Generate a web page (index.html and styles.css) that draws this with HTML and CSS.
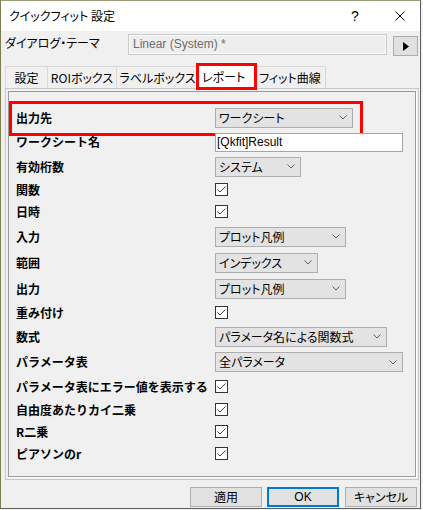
FILE: index.html
```html
<!DOCTYPE html>
<html lang="ja">
<head>
<meta charset="utf-8">
<title>クイックフィット 設定</title>
<link rel="stylesheet" href="styles.css">
</head>
<body>
<div class="window">
  <div class="titlebar">
    <span class="title">クイックフィット 設定</span>
    <span class="tb-btn help">?</span>
    <span class="tb-btn close"><svg width="10" height="10" viewBox="0 0 10 10"><path d="M0.5 0.5 L9.5 9.5 M9.5 0.5 L0.5 9.5" stroke="#000" stroke-width="1" fill="none"/></svg></span>
  </div>
  <div class="client">
    <div class="theme-row">
      <span class="theme-label">ダイアログ・テーマ</span>
      <div class="theme-input">Linear (System) *</div>
      <div class="arrow-btn"><svg width="6" height="9" viewBox="0 0 6 9"><polygon points="0,0 6,4.5 0,9" fill="#000"/></svg></div>
    </div>
    <div class="tabs">
      <div class="tab t1">設定</div>
      <div class="tab t2">ROIボックス</div>
      <div class="tab t3">ラベルボックス</div>
      <div class="tab sel">レポート</div>
      <div class="tab t5">フィット曲線</div>
    </div>
    <div class="panel">
      <div class="group">
        <div class="row h25 highlight">
          <span class="lbl">出力先</span>
          <div class="sel w138"><span>ワークシート</span><svg class="chev" width="8" height="5" viewBox="0 0 8 5"><polyline points="0.5,0.5 4,4 7.5,0.5" fill="none" stroke="#606060"/></svg></div>
        </div>
        <div class="row h24">
          <span class="lbl">ワークシート名</span>
          <div class="txt">[Qkfit]Result</div>
        </div>
        <div class="row h25">
          <span class="lbl">有効桁数</span>
          <div class="sel w86"><span>システム</span><svg class="chev" width="8" height="5" viewBox="0 0 8 5"><polyline points="0.5,0.5 4,4 7.5,0.5" fill="none" stroke="#606060"/></svg></div>
        </div>
        <div class="row h21">
          <span class="lbl">関数</span>
          <svg class="cb" width="13" height="13" viewBox="0 0 13 13"><rect x="0.5" y="0.5" width="12" height="12" fill="#fff" stroke="#333"/><polyline points="2.5,6.5 5,9 10.5,3.5" fill="none" stroke="#444"/></svg>
        </div>
        <div class="row h23">
          <span class="lbl">日時</span>
          <svg class="cb" width="13" height="13" viewBox="0 0 13 13"><rect x="0.5" y="0.5" width="12" height="12" fill="#fff" stroke="#333"/><polyline points="2.5,6.5 5,9 10.5,3.5" fill="none" stroke="#444"/></svg>
        </div>
        <div class="row h27">
          <span class="lbl">入力</span>
          <div class="sel w131"><span>プロット凡例</span><svg class="chev" width="8" height="5" viewBox="0 0 8 5"><polyline points="0.5,0.5 4,4 7.5,0.5" fill="none" stroke="#606060"/></svg></div>
        </div>
        <div class="row h25">
          <span class="lbl">範囲</span>
          <div class="sel w103"><span>インデックス</span><svg class="chev" width="8" height="5" viewBox="0 0 8 5"><polyline points="0.5,0.5 4,4 7.5,0.5" fill="none" stroke="#606060"/></svg></div>
        </div>
        <div class="row h27">
          <span class="lbl">出力</span>
          <div class="sel w131"><span>プロット凡例</span><svg class="chev" width="8" height="5" viewBox="0 0 8 5"><polyline points="0.5,0.5 4,4 7.5,0.5" fill="none" stroke="#606060"/></svg></div>
        </div>
        <div class="row h21">
          <span class="lbl">重み付け</span>
          <svg class="cb" width="13" height="13" viewBox="0 0 13 13"><rect x="0.5" y="0.5" width="12" height="12" fill="#fff" stroke="#333"/><polyline points="2.5,6.5 5,9 10.5,3.5" fill="none" stroke="#444"/></svg>
        </div>
        <div class="row h27">
          <span class="lbl">数式</span>
          <div class="sel w172"><span>パラメータ名による関数式</span><svg class="chev" width="8" height="5" viewBox="0 0 8 5"><polyline points="0.5,0.5 4,4 7.5,0.5" fill="none" stroke="#606060"/></svg></div>
        </div>
        <div class="row h24">
          <span class="lbl">パラメータ表</span>
          <div class="sel w188"><span>全パラメータ</span><svg class="chev" width="8" height="5" viewBox="0 0 8 5"><polyline points="0.5,0.5 4,4 7.5,0.5" fill="none" stroke="#606060"/></svg></div>
        </div>
        <div class="row h25">
          <span class="lbl">パラメータ表にエラー値を表示する</span>
          <svg class="cb" width="13" height="13" viewBox="0 0 13 13"><rect x="0.5" y="0.5" width="12" height="12" fill="#fff" stroke="#333"/><polyline points="2.5,6.5 5,9 10.5,3.5" fill="none" stroke="#444"/></svg>
        </div>
        <div class="row h21">
          <span class="lbl">自由度あたりカイ二乗</span>
          <svg class="cb" width="13" height="13" viewBox="0 0 13 13"><rect x="0.5" y="0.5" width="12" height="12" fill="#fff" stroke="#333"/><polyline points="2.5,6.5 5,9 10.5,3.5" fill="none" stroke="#444"/></svg>
        </div>
        <div class="row h23">
          <span class="lbl">R二乗</span>
          <svg class="cb" width="13" height="13" viewBox="0 0 13 13"><rect x="0.5" y="0.5" width="12" height="12" fill="#fff" stroke="#333"/><polyline points="2.5,6.5 5,9 10.5,3.5" fill="none" stroke="#444"/></svg>
        </div>
        <div class="row h21">
          <span class="lbl">ピアソンのr</span>
          <svg class="cb" width="13" height="13" viewBox="0 0 13 13"><rect x="0.5" y="0.5" width="12" height="12" fill="#fff" stroke="#333"/><polyline points="2.5,6.5 5,9 10.5,3.5" fill="none" stroke="#444"/></svg>
        </div>
      </div>
    </div>
    <div class="btns">
      <div class="btn">適用</div>
      <div class="btn ok">OK</div>
      <div class="btn">キャンセル</div>
    </div>
  </div>
</div>
</body>
</html>
```

FILE: styles.css
```css
* { box-sizing: border-box; }
html, body { margin: 0; padding: 0; }
body {
  background: #f3f3f3;
  font-family: "Noto Sans CJK JP", sans-serif;
  font-size: 12px;
  line-height: 16px;
  color: #000;
}
.window {
  width: 421px;
  height: 509px;
  border: 1px solid #5c5c5c;
  border-left-color: #7d7d4e;
  border-top-color: #9a9a7a;
  background: #f0f0f0;
  display: flex;
  flex-direction: column;
}
.titlebar {
  height: 30px;
  flex: none;
  background: #fff;
  display: flex;
  align-items: center;
}
.title {
  flex: 1;
  padding-left: 8px;
  font-feature-settings: "palt";
}
.tb-btn {
  height: 30px;
  display: flex;
  align-items: center;
  justify-content: center;
}
.help {
  width: 42px;
  font-family: "Liberation Sans", sans-serif;
  font-size: 14px;
}
.close {
  width: 44px;
  padding-left: 4px;
}
.client {
  flex: 1;
  padding: 3px 0 0 4px;
  display: flex;
  flex-direction: column;
}
.theme-row {
  height: 22px;
  display: flex;
  align-items: flex-start;
}
.theme-label {
  width: 123px;
  padding-top: 1px;
  font-feature-settings: "palt";
}
.theme-input {
  width: 259px;
  height: 21px;
  border: 1px solid #cacaca;
  box-shadow: inset 0 0 0 1px #fafafa;
  background: #eeeeee;
  color: #6d6d6d;
  font-family: "Liberation Sans", sans-serif;
  padding-left: 4px;
  line-height: 19px;
}
.arrow-btn {
  margin-left: 6px;
  margin-top: 2px;
  width: 25px;
  height: 20px;
  border: 1px solid #adadad;
  background: #e1e1e1;
  display: flex;
  align-items: center;
  justify-content: center;
}
.tabs {
  margin-top: 8px;
  height: 24px;
  display: flex;
  align-items: flex-end;
}
.tab {
  height: 22px;
  border: 1px solid #d9d9d9;
  border-bottom: none;
  margin-left: -1px;
  display: flex;
  align-items: center;
  justify-content: center;
  background: #f0f0f0;
  font-feature-settings: "palt";
}
.t1 { width: 43px; margin-left: 0; }
.t2 { width: 70px; }
.t3 { width: 83px; }
.t5 { width: 72px; }
.tab.sel {
  width: 57px;
  height: 23px;
  background: #fff;
  position: relative;
  z-index: 1;
  outline: 3px solid #ff0000;
  outline-offset: -1px;
}
.panel {
  width: 414px;
  height: 392px;
  border: 1px solid #c8c8c8;
  padding: 2px;
}
.group {
  height: 386px;
  border: 1px solid #9a9a9a;
  box-shadow: 1px 1px 0 #ffffff;
  padding-top: 13px;
}
.row {
  display: grid;
  grid-template-columns: 206px auto;
  align-items: center;
  justify-items: start;
  position: relative;
}
.h21 { height: 21px; }
.h23 { height: 23px; }
.h24 { height: 24px; }
.h25 { height: 25px; }
.h27 { height: 27px; }
.lbl {
  padding-left: 7px;
  font-weight: bold;
  white-space: nowrap;
}
.highlight::after {
  content: "";
  position: absolute;
  left: 0;
  top: -4px;
  width: 348px;
  height: 29px;
  border: 3px solid #ff0000;
}
.sel {
  height: 20px;
  border: 1px solid #adadad;
  background: #e3e3e3;
  display: flex;
  align-items: center;
  justify-content: space-between;
  padding: 0 5px 0 3px;
  font-feature-settings: "palt";
  white-space: nowrap;
}
.chev { flex: none; }
.w86 { width: 86px; }
.w103 { width: 103px; }
.w131 { width: 131px; }
.w138 { width: 138px; }
.w172 { width: 172px; }
.w188 { width: 188px; }
.txt {
  width: 188px;
  height: 19px;
  border: 1px solid #a5a5a5;
  background: #fff;
  padding-left: 1px;
  font-family: "Liberation Sans", sans-serif;
  line-height: 17px;
}
.cb { display: block; }
.btns {
  margin-top: 7px;
  height: 20px;
  display: flex;
  justify-content: flex-end;
  padding-right: 3px;
}
.btn {
  width: 72px;
  height: 20px;
  border: 1px solid #adadad;
  background: #e1e1e1;
  display: flex;
  align-items: center;
  justify-content: center;
  font-feature-settings: "palt";
  margin-left: 6px;
}
.btn.ok {
  border: 2px solid #0078d7;
  font-family: "Liberation Sans", sans-serif;
  margin-left: 5px;
}
```
